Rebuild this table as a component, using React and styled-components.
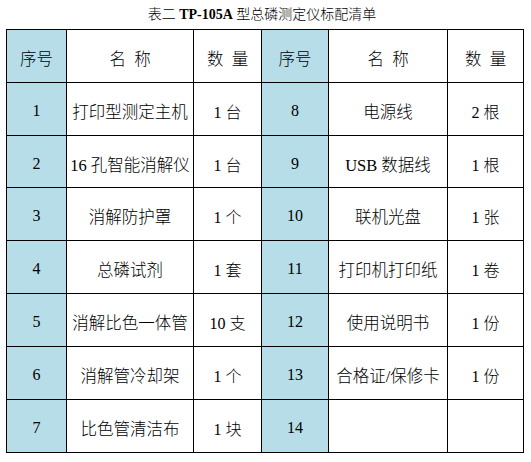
import React from "react";
import styled, { createGlobalStyle } from "styled-components";

const Global = createGlobalStyle`
  html, body { margin: 0; padding: 0; background: #fff; }
  body {
    font-family: "Liberation Serif", "Noto Sans CJK SC", serif;
    color: #000;
  }
`;

const Page = styled.div`
  width: 531px;
  height: 462px;
  padding-left: 6px;
  box-sizing: border-box;
`;

const Title = styled.div`
  width: 518px;
  height: 29px;
  line-height: 29px;
  text-align: center;
  font-size: 14px;
  font-weight: 300;
  padding-right: 6px;
  box-sizing: border-box;
  white-space: pre;
`;

const Model = styled.b`
  font-weight: 700;
  font-family: "Liberation Serif", serif;
`;

const Grid = styled.div`
  display: grid;
  grid-template-columns: 59px 126px 67px 66px 118px 75px;
  grid-template-rows: 52px 52px 51px 52px 52px 52px 52px 52px;
  gap: 1px;
  padding: 1px;
  background: #000;
  width: 518px;
  box-sizing: border-box;
`;

const Cell = styled.div`
  background: ${(p) => (p.$index ? "#b7dee8" : "#fff")};
  display: flex;
  align-items: center;
  justify-content: center;
  padding-top: 4px;
  box-sizing: border-box;
  white-space: pre;
  font-weight: 300;
  font-family: ${(p) =>
    p.$head ? '"Noto Sans CJK SC", sans-serif' : '"Liberation Serif", "Noto Sans CJK SC", serif'};
  font-size: ${(p) => (p.$head ? "16.5px" : "16px")};
`;

const Name = styled.span`
  font-size: 16.5px;
`;

const left = [
  ["1", "打印型测定主机", "1 台"],
  ["2", "16 孔智能消解仪", "1 台"],
  ["3", "消解防护罩", "1 个"],
  ["4", "总磷试剂", "1 套"],
  ["5", "消解比色一体管", "10 支"],
  ["6", "消解管冷却架", "1 个"],
  ["7", "比色管清洁布", "1 块"],
];

const right = [
  ["8", "电源线", "2 根"],
  ["9", "USB 数据线", "1 根"],
  ["10", "联机光盘", "1 张"],
  ["11", "打印机打印纸", "1 卷"],
  ["12", "使用说明书", "1 份"],
  ["13", "合格证/保修卡", "1 份"],
  ["14", "", ""],
];

export default function App() {
  return (
    <Page>
      <Global />
      <Title>
        表二 <Model>TP-105A</Model> 型总磷测定仪标配清单
      </Title>
      <Grid>
        <Cell $index $head>序号</Cell>
        <Cell $head>名{"\u2002"}称</Cell>
        <Cell $head>数{"\u2002"}量</Cell>
        <Cell $index $head>序号</Cell>
        <Cell $head>名{"\u2002"}称</Cell>
        <Cell $head>数{"\u2002"}量</Cell>
        {left.map((l, i) => {
          const r = right[i];
          return (
            <React.Fragment key={i}>
              <Cell $index>{l[0]}</Cell>
              <Cell><Name>{l[1]}</Name></Cell>
              <Cell>{l[2]}</Cell>
              <Cell $index>{r[0]}</Cell>
              <Cell><Name>{r[1]}</Name></Cell>
              <Cell>{r[2]}</Cell>
            </React.Fragment>
          );
        })}
      </Grid>
    </Page>
  );
}
